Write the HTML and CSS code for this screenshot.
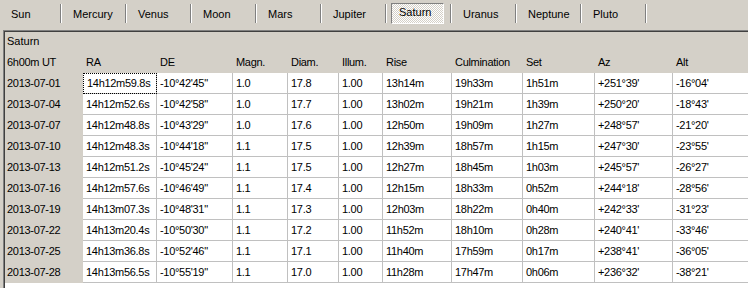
FILE: index.html
```html
<!DOCTYPE html>
<html lang="en">
<head>
    <meta charset="UTF-8">
    <title>Planets - Saturn</title>
    <link rel="stylesheet" href="styles.css">
</head>
<body>
    <div class="toolbar">
        <div class="tab first"><span class="btn">Sun</span><span class="sep"></span></div>
        <div class="tab"><span class="btn">Mercury</span><span class="sep"></span></div>
        <div class="tab"><span class="btn">Venus</span><span class="sep"></span></div>
        <div class="tab"><span class="btn">Moon</span><span class="sep"></span></div>
        <div class="tab"><span class="btn">Mars</span><span class="sep"></span></div>
        <div class="tab"><span class="btn">Jupiter</span><span class="sep"></span></div>
        <div class="tab"><span class="btn down">Saturn</span><span class="sep"></span></div>
        <div class="tab"><span class="btn">Uranus</span><span class="sep"></span></div>
        <div class="tab"><span class="btn">Neptune</span><span class="sep"></span></div>
        <div class="tab"><span class="btn">Pluto</span><span class="sep"></span></div>
    </div>

    <div class="panel">
        <div class="panel-inner">
            <div class="caption">Saturn</div>
            <div class="grid">
                <table>
                    <colgroup>
                        <col class="c-date">
                        <col class="c-ra">
                        <col class="c-de">
                        <col class="c-mag">
                        <col class="c-diam">
                        <col class="c-illum">
                        <col class="c-rise">
                        <col class="c-culm">
                        <col class="c-set">
                        <col class="c-az">
                        <col class="c-alt">
                    </colgroup>
                    <tr class="head">
                        <td class="fixed">6h00m UT</td>
                        <td>RA</td>
                        <td>DE</td>
                        <td>Magn.</td>
                        <td>Diam.</td>
                        <td>Illum.</td>
                        <td>Rise</td>
                        <td>Culmination</td>
                        <td>Set</td>
                        <td>Az</td>
                        <td>Alt</td>
                    </tr>
                    <tr>
                        <td class="fixed">2013-07-01</td>
                        <td class="focus">14h12m59.8s</td>
                        <td>-10°42'45"</td>
                        <td>1.0</td>
                        <td>17.8</td>
                        <td>1.00</td>
                        <td>13h14m</td>
                        <td>19h33m</td>
                        <td>1h51m</td>
                        <td>+251°39'</td>
                        <td>-16°04'</td>
                    </tr>
                    <tr>
                        <td class="fixed">2013-07-04</td>
                        <td>14h12m52.6s</td>
                        <td>-10°42'58"</td>
                        <td>1.0</td>
                        <td>17.7</td>
                        <td>1.00</td>
                        <td>13h02m</td>
                        <td>19h21m</td>
                        <td>1h39m</td>
                        <td>+250°20'</td>
                        <td>-18°43'</td>
                    </tr>
                    <tr>
                        <td class="fixed">2013-07-07</td>
                        <td>14h12m48.8s</td>
                        <td>-10°43'29"</td>
                        <td>1.0</td>
                        <td>17.6</td>
                        <td>1.00</td>
                        <td>12h50m</td>
                        <td>19h09m</td>
                        <td>1h27m</td>
                        <td>+248°57'</td>
                        <td>-21°20'</td>
                    </tr>
                    <tr>
                        <td class="fixed">2013-07-10</td>
                        <td>14h12m48.3s</td>
                        <td>-10°44'18"</td>
                        <td>1.1</td>
                        <td>17.5</td>
                        <td>1.00</td>
                        <td>12h39m</td>
                        <td>18h57m</td>
                        <td>1h15m</td>
                        <td>+247°30'</td>
                        <td>-23°55'</td>
                    </tr>
                    <tr>
                        <td class="fixed">2013-07-13</td>
                        <td>14h12m51.2s</td>
                        <td>-10°45'24"</td>
                        <td>1.1</td>
                        <td>17.5</td>
                        <td>1.00</td>
                        <td>12h27m</td>
                        <td>18h45m</td>
                        <td>1h03m</td>
                        <td>+245°57'</td>
                        <td>-26°27'</td>
                    </tr>
                    <tr>
                        <td class="fixed">2013-07-16</td>
                        <td>14h12m57.6s</td>
                        <td>-10°46'49"</td>
                        <td>1.1</td>
                        <td>17.4</td>
                        <td>1.00</td>
                        <td>12h15m</td>
                        <td>18h33m</td>
                        <td>0h52m</td>
                        <td>+244°18'</td>
                        <td>-28°56'</td>
                    </tr>
                    <tr>
                        <td class="fixed">2013-07-19</td>
                        <td>14h13m07.3s</td>
                        <td>-10°48'31"</td>
                        <td>1.1</td>
                        <td>17.3</td>
                        <td>1.00</td>
                        <td>12h03m</td>
                        <td>18h22m</td>
                        <td>0h40m</td>
                        <td>+242°33'</td>
                        <td>-31°23'</td>
                    </tr>
                    <tr>
                        <td class="fixed">2013-07-22</td>
                        <td>14h13m20.4s</td>
                        <td>-10°50'30"</td>
                        <td>1.1</td>
                        <td>17.2</td>
                        <td>1.00</td>
                        <td>11h52m</td>
                        <td>18h10m</td>
                        <td>0h28m</td>
                        <td>+240°41'</td>
                        <td>-33°46'</td>
                    </tr>
                    <tr>
                        <td class="fixed">2013-07-25</td>
                        <td>14h13m36.8s</td>
                        <td>-10°52'46"</td>
                        <td>1.1</td>
                        <td>17.1</td>
                        <td>1.00</td>
                        <td>11h40m</td>
                        <td>17h59m</td>
                        <td>0h17m</td>
                        <td>+238°41'</td>
                        <td>-36°05'</td>
                    </tr>
                    <tr>
                        <td class="fixed">2013-07-28</td>
                        <td>14h13m56.5s</td>
                        <td>-10°55'19"</td>
                        <td>1.1</td>
                        <td>17.0</td>
                        <td>1.00</td>
                        <td>11h28m</td>
                        <td>17h47m</td>
                        <td>0h06m</td>
                        <td>+236°32'</td>
                        <td>-38°21'</td>
                    </tr>
                </table>
            </div>
        </div>
    </div>
</body>
</html>
```

FILE: styles.css
```css
body {
    margin: 0;
    width: 748px;
    height: 288px;
    overflow: hidden;
    background-color: #d4d0c8;
    color: #000;
    font-family: "Liberation Sans", Arial, sans-serif;
    font-size: 11px;
}
.toolbar {
    display: flex;
    height: 30px;
}
.tab {
    display: flex;
    flex: none;
    width: 65px;
}
.tab.first {
    width: 62px;
}
.btn {
    display: block;
    box-sizing: border-box;
    width: 53px;
    height: 21px;
    margin: 3px 0 0 4px;
    padding: 2px 0 0 6px;
    line-height: 17px;
    border: 1px solid transparent;
    white-space: nowrap;
}
.btn.down {
    padding: 0 0 0 7px;
    border-color: #808080 #fff #fff #808080;
    background: repeating-conic-gradient(#fff 0 25%, #d4d0c8 0 50%) 0 0 / 2px 2px;
}
.sep {
    display: block;
    width: 0;
    height: 19px;
    margin: 4px 0 0 auto;
    border-left: 1px solid #808080;
    border-right: 1px solid #fff;
}
.panel {
    margin-left: 3px;
    border-top: 1px solid #808080;
    border-left: 1px solid #808080;
}
.panel-inner {
    border-top: 1px solid #404040;
    border-left: 1px solid #404040;
}
.caption {
    height: 20px;
    line-height: 18px;
    padding-left: 2px;
}
.grid {
    height: 240px;
    background-color: #fff;
}
table {
    table-layout: fixed;
    width: 748px;
    border-collapse: separate;
    border-spacing: 0;
    letter-spacing: -0.3px;
}
.c-date { width: 78px; }
.c-ra { width: 74px; }
.c-de { width: 76px; }
.c-mag { width: 55px; }
.c-diam { width: 51px; }
.c-illum { width: 44px; }
.c-rise { width: 69px; }
.c-culm { width: 71px; }
.c-set { width: 72px; }
.c-az { width: 78px; }
.c-alt { width: 80px; }
td {
    height: 20px;
    padding: 0 0 0 3px;
    line-height: 20px;
    white-space: nowrap;
    overflow: hidden;
    border-right: 1px solid #c0c0c0;
    border-bottom: 1px solid #c0c0c0;
}
td.fixed {
    padding-left: 2px;
}
.head td,
td.fixed {
    background-color: #d4d0c8;
    border-color: #d4d0c8;
}
td.focus {
    padding-left: 4px;
    outline: 1px dotted #000;
    outline-offset: -1px;
}
```
